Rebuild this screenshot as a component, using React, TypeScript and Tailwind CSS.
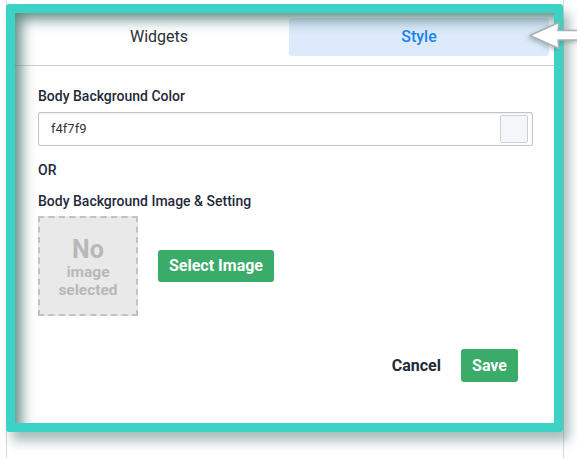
import React from 'react';

const font = { fontFamily: 'Roboto, "Noto Sans", Arial, sans-serif' };

const PointerArrow: React.FC = () => (
  <svg
    className="absolute left-[528px] top-[20px] pointer-events-none"
    width="52"
    height="32"
    viewBox="0 0 52 32"
    style={{ filter: 'drop-shadow(-2px 2px 2px rgba(60,90,90,0.35))' }}
  >
    <path
      d="M2 15.5 L31 2.5 L30 10.5 L51 10.5 L51 20 L30 20 L31 28.5 Z"
      fill="#ffffff"
      stroke="#a9b1b1"
      strokeWidth="1.5"
      strokeLinejoin="round"
    />
  </svg>
);

export default function App() {
  return (
    <div className="relative w-[577px] h-[458px] bg-white overflow-hidden" style={font}>
      {/* page panel behind the highlighted dialog */}
      <div className="ml-[6px] w-[558px] h-full border-x border-[#d6d9d9] pt-[4px]">
        <div className="relative -ml-[1px] w-[557px] h-[428px] border-[9px] border-[#3dd2c6] rounded-[3px] bg-white shadow-[6px_9px_12px_rgba(45,95,90,0.42)]">
          {/* tabs */}
          <div className="flex pl-[14px] pr-[5px] pt-[5px] h-[53px] border-b border-[#cfcfcf]">
            <button className="w-[260px] h-[38px] text-[16px] text-[#2b2f38]">Widgets</button>
            <button className="w-[260px] h-[38px] text-[16px] font-medium text-[#1a84f2] bg-[#dceafb] rounded-[3px]">
              Style
            </button>
          </div>

          {/* style settings */}
          <div className="pl-[23px] pr-[21px] pt-[20px]">
            <div className="text-[14px] leading-[20px] font-medium text-[#1f2a3a]">Body Background Color</div>
            <div className="mt-[6px] h-[34px] flex items-center justify-between pl-[12px] pr-[4px] border border-[#c4c4c4] rounded-[2px] shadow-[inset_0_1px_2px_rgba(0,0,0,0.08)]">
              <span className="text-[13px] text-[#333]">f4f7f9</span>
              <span className="w-[28px] h-[28px] bg-[#f4f7f9] border border-[#cdd0d0] rounded-[2px]" />
            </div>

            <div className="mt-[14px] text-[14px] leading-[20px] font-medium text-[#1f2a3a]">OR</div>
            <div className="mt-[11px] text-[14px] leading-[20px] font-medium text-[#1f2a3a]">
              Body Background Image &amp; Setting
            </div>

            <div className="mt-[5px] flex items-center gap-[20px]">
              <div className="w-[100px] h-[100px] flex flex-col items-center justify-center bg-[#e9e9e9] border-2 border-dashed border-[#c2c2c2] text-[#b8b8b8] font-bold">
                <span className="text-[25px] leading-[27px] mt-[2px]">No</span>
                <span className="text-[15.5px] leading-[18px]">image</span>
                <span className="text-[15.5px] leading-[18px]">selected</span>
              </div>
              <button className="w-[116px] h-[32px] bg-[#3aab69] text-white text-[16px] font-bold rounded-[3px]">
                Select Image
              </button>
            </div>

            <div className="mt-[33px] flex items-center justify-end gap-[20px] pr-[15px]">
              <button className="text-[16px] font-bold text-[#1f2a3a]">Cancel</button>
              <button className="w-[57px] h-[33px] bg-[#3aab69] text-white text-[16px] font-bold rounded-[3px]">
                Save
              </button>
            </div>
          </div>

          {/* inner shade over the content edge */}
          <div className="absolute inset-0 pointer-events-none shadow-[inset_12px_12px_14px_-6px_rgba(40,95,90,0.75)]" />
        </div>
      </div>
      <PointerArrow />
    </div>
  );
}
